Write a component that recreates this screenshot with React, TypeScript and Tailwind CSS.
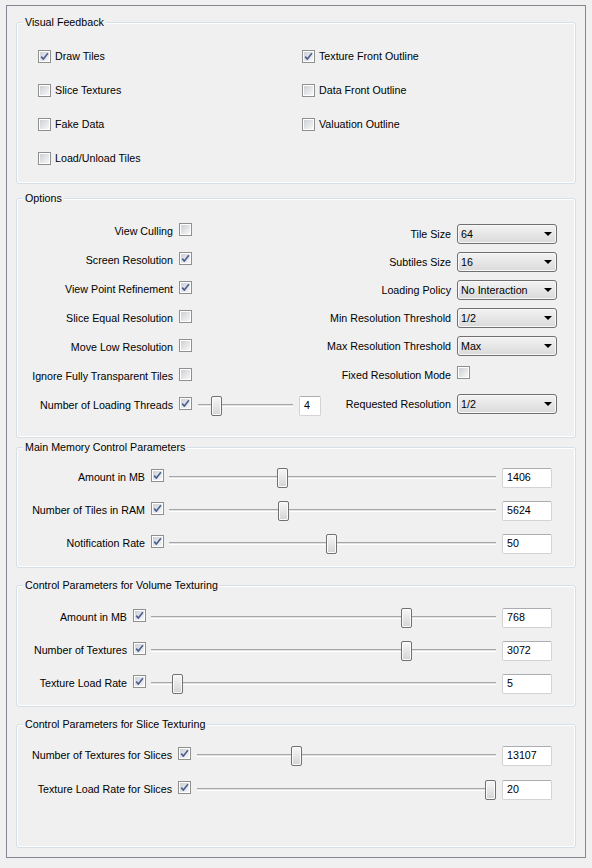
import type { ReactNode } from 'react';

// Qt "Tile Manager" settings panel, Windows 7 look
function CheckBox({ checked = false }: { checked?: boolean }) {
  return (
    <span className="relative inline-block w-[13px] h-[13px] shrink-0 border border-[#8f8f8f] bg-white p-[1px]">
      <span className="block w-full h-full bg-linear-to-br from-[#cdd0d5] to-[#f7f7f7]" />
      {checked && (
        <svg className="absolute inset-0" width="11" height="11" viewBox="0 0 11 11">
          <path d="M2.2 5.6 L4.4 8.1 L8.9 2.2" fill="none" stroke="#4a5f92" strokeWidth="1.6" strokeLinejoin="round" />
        </svg>
      )}
    </span>
  );
}

function GroupBox({ title, className, children }: { title: string; className: string; children: ReactNode }) {
  return (
    <fieldset className={`rounded-[3px] border border-[#d5dfe5] shadow-[inset_0_0_0_1px_#ffffff] ${className}`}>
      <legend className="ml-[6px] px-[2px] bg-[#f0f0f0] leading-[13px]">{title}</legend>
      {children}
    </fieldset>
  );
}

function Slider({ className, width, frac }: { className: string; width: number; frac: number }) {
  const left = Math.round(frac * (width - 11));
  return (
    <div className={`relative h-[20px] shrink-0 ${className}`}>
      <div className="absolute left-0 right-0 top-[8px] h-[3px] border-t border-b border-t-[#a6a6a6] border-b-white bg-[#e2e2e2]" />
      <div
        className="absolute top-0 w-[11px] h-[20px] rounded-[2px] border border-[#707070] bg-linear-to-b from-[#f8f8f8] to-[#d4d4d4] shadow-[inset_0_0_0_1px_#fbfbfb]"
        style={{ left }}
      />
    </div>
  );
}

function LineEdit({ value, className = 'w-[50px]' }: { value: string; className?: string }) {
  return (
    <div className={`h-[20px] shrink-0 flex items-center pl-[4px] bg-white border border-[#d3d3d3] border-t-[#abadb3] rounded-[2px] ${className}`}>
      {value}
    </div>
  );
}

function Combo({ value }: { value: string }) {
  return (
    <div className="ml-[6px] w-[100px] h-[20px] shrink-0 flex items-center pl-[3px] pr-[4px] rounded-[3px] border border-[#707070] bg-linear-to-b from-[#f3f3f3] to-[#dadada] shadow-[inset_0_0_0_1px_#f8f8f8]">
      <span className="flex-1">{value}</span>
      <svg width="8" height="4" viewBox="0 0 8 4">
        <path d="M0 0 H8 L4 4 Z" fill="#000" />
      </svg>
    </div>
  );
}

const visual = [
  ['Draw Tiles', true],
  ['Texture Front Outline', true],
  ['Slice Textures', false],
  ['Data Front Outline', false],
  ['Fake Data', false],
  ['Valuation Outline', false],
  ['Load/Unload Tiles', false],
] as const;

const leftOptions = [
  ['View Culling', false],
  ['Screen Resolution', true],
  ['View Point Refinement', true],
  ['Slice Equal Resolution', false],
  ['Move Low Resolution', false],
  ['Ignore Fully Transparent Tiles', false],
] as const;

const combos = [
  ['Tile Size', '64'],
  ['Subtiles Size', '16'],
  ['Loading Policy', 'No Interaction'],
  ['Min Resolution Threshold', '1/2'],
  ['Max Resolution Threshold', 'Max'],
] as const;

export default function App() {
  return (
    <div className="w-[592px] h-[868px] bg-[#f0f0f0] pt-[5px] pl-[6px] text-[10.7px] text-black font-['Liberation_Sans',Arial,sans-serif]">
      <div className="w-[580px] h-[853px] border border-[#828790] px-[9px] pt-[10px]">
        {/* Visual Feedback */}
        <GroupBox title="Visual Feedback" className="h-[168px]">
          <div className="grid grid-cols-[264px_1fr] gap-y-[21px] pl-[21px] pt-[21px]">
            {visual.map(([label, checked]) => (
              <div key={label} className="flex items-center h-[13px]">
                <CheckBox checked={checked} />
                <span className="ml-[4px]">{label}</span>
              </div>
            ))}
          </div>
        </GroupBox>

        {/* Options */}
        <GroupBox title="Options" className="mt-[8px] h-[246px]">
          <div className="flex">
            <div className="w-[283px] shrink-0 flex flex-col gap-[8px] pt-[16px]">
              {leftOptions.map(([label, checked]) => (
                <div key={label} className="flex items-center h-[21px]">
                  <span className="w-[156px] shrink-0 text-right">{label}</span>
                  <span className="ml-[6px]"><CheckBox checked={checked} /></span>
                </div>
              ))}
              <div className="flex items-center h-[21px]">
                <span className="w-[156px] shrink-0 text-right">Number of Loading Threads</span>
                <span className="ml-[6px]"><CheckBox checked /></span>
                <Slider className="ml-[6px] w-[95px]" width={95} frac={0.155} />
                <LineEdit value="4" className="ml-[6px] w-[22px]" />
              </div>
            </div>
            <div className="flex-1 flex flex-col gap-[8px] pt-[19px]">
              {combos.map(([label, value]) => (
                <div key={label} className="flex items-center h-[20px]">
                  <span className="w-[151px] shrink-0 text-right">{label}</span>
                  <Combo value={value} />
                </div>
              ))}
              <div className="flex items-center h-[22px]">
                <span className="w-[151px] shrink-0 text-right">Fixed Resolution Mode</span>
                <span className="ml-[6px]"><CheckBox /></span>
              </div>
              <div className="flex items-center h-[20px]">
                <span className="w-[151px] shrink-0 text-right">Requested Resolution</span>
                <Combo value="1/2" />
              </div>
            </div>
          </div>
        </GroupBox>

        {/* Main Memory Control Parameters */}
        <GroupBox title="Main Memory Control Parameters" className="mt-[3px] h-[127px]">
          <div className="flex flex-col gap-[12px] pt-[13px]">
            {[
              ['Amount in MB', '1406', 0.342],
              ['Number of Tiles in RAM', '5624', 0.345],
              ['Notification Rate', '50', 0.497],
            ].map(([label, value, frac]) => (
              <div key={label as string} className="flex items-center h-[21px]">
                <span className="w-[128px] shrink-0 text-right">{label}</span>
                <span className="ml-[6px]"><CheckBox checked /></span>
                <Slider className="ml-[5px] w-[327px]" width={327} frac={frac as number} />
                <LineEdit value={value as string} className="ml-[6px] w-[50px]" />
              </div>
            ))}
          </div>
        </GroupBox>

        {/* Control Parameters for Volume Texturing */}
        <GroupBox title="Control Parameters for Volume Texturing" className="mt-[11px] h-[128px]">
          <div className="flex flex-col gap-[12px] pt-[15px]">
            {[
              ['Amount in MB', '768', 0.749],
              ['Number of Textures', '3072', 0.749],
              ['Texture Load Rate', '5', 0.063],
            ].map(([label, value, frac]) => (
              <div key={label as string} className="flex items-center h-[21px]">
                <span className="w-[110px] shrink-0 text-right">{label}</span>
                <span className="ml-[6px]"><CheckBox checked /></span>
                <Slider className="ml-[5px] w-[345px]" width={345} frac={frac as number} />
                <LineEdit value={value as string} className="ml-[6px] w-[50px]" />
              </div>
            ))}
          </div>
        </GroupBox>

        {/* Control Parameters for Slice Texturing */}
        <GroupBox title="Control Parameters for Slice Texturing" className="mt-[11px] h-[130px]">
          <div className="flex flex-col gap-[13px] pt-[14px]">
            {[
              ['Number of Textures for Slices', '13107', 0.326],
              ['Texture Load Rate for Slices', '20', 1],
            ].map(([label, value, frac]) => (
              <div key={label as string} className="flex items-center h-[21px]">
                <span className="w-[155px] shrink-0 text-right">{label}</span>
                <span className="ml-[6px]"><CheckBox checked /></span>
                <Slider className="ml-[6px] w-[299px]" width={299} frac={frac as number} />
                <LineEdit value={value as string} className="ml-[6px] w-[50px]" />
              </div>
            ))}
          </div>
        </GroupBox>
      </div>
    </div>
  );
}
